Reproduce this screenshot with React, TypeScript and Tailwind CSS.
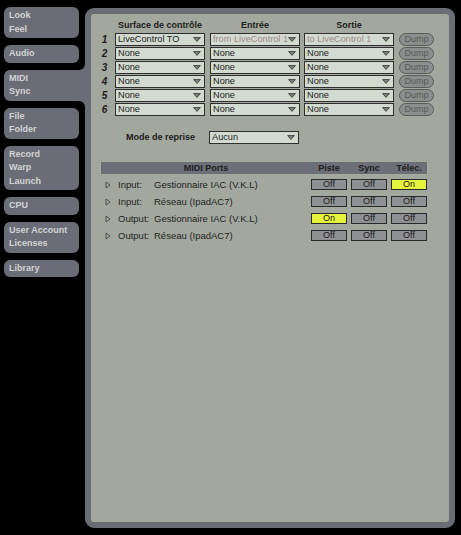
import clsx from "clsx";

const tabs = [
  { lines: ["Look", "Feel"] },
  { lines: ["Audio"] },
  { lines: ["MIDI", "Sync"], active: true },
  { lines: ["File", "Folder"] },
  { lines: ["Record", "Warp", "Launch"] },
  { lines: ["CPU"] },
  { lines: ["User Account", "Licenses"] },
  { lines: ["Library"] },
];

const surfaces = [
  { n: 1, surface: "LiveControl TO", input: "from LiveControl 1", output: "to LiveControl 1", dim: true },
  { n: 2, surface: "None", input: "None", output: "None" },
  { n: 3, surface: "None", input: "None", output: "None" },
  { n: 4, surface: "None", input: "None", output: "None" },
  { n: 5, surface: "None", input: "None", output: "None" },
  { n: 6, surface: "None", input: "None", output: "None" },
];

const ports = [
  { kind: "Input:", name: "Gestionnaire IAC (V.K.L)", state: [false, false, true] },
  { kind: "Input:", name: "Réseau (IpadAC7)", state: [false, false, false] },
  { kind: "Output:", name: "Gestionnaire IAC (V.K.L)", state: [true, false, false] },
  { kind: "Output:", name: "Réseau (IpadAC7)", state: [false, false, false] },
];

const Arrow = () => (
  <svg width="8" height="5" viewBox="0 0 8 5" className="shrink-0">
    <path d="M0.6 0.6 H7.4 L4 4.4 Z" fill="#80837f" stroke="#3c3c3c" strokeWidth="0.9" />
  </svg>
);

const Dropdown = ({ value, dim }: { value: string; dim?: boolean }) => (
  <div className="w-[90px] h-[13px] flex items-center border border-[#2e2e2e] bg-[#d3dbd1] pl-[2px] pr-[3px] shrink-0">
    <span
      className={clsx(
        "flex-1 overflow-hidden whitespace-nowrap text-[9.2px] leading-[11px]",
        dim ? "text-[#a08789]" : "text-[#1b1b1b]"
      )}
    >
      {value}
    </span>
    <Arrow />
  </div>
);

const Dump = () => (
  <div className="w-[35px] h-[13px] rounded-full border border-[#5a5c5c] bg-[#8b8e8d] text-[#575959] text-[9px] flex items-center justify-center leading-none">
    Dump
  </div>
);

const Toggle = ({ on }: { on: boolean }) => (
  <div
    className={clsx(
      "w-[36px] h-[11px] border border-[#2a2a2a] flex items-center justify-center text-[9px] leading-none text-[#1a1a1a]",
      on ? "bg-[#e6f43c]" : "bg-[#8e9094]"
    )}
  >
    {on ? "On" : "Off"}
  </div>
);

const Tab = ({ lines, active }: { lines: string[]; active?: boolean }) => (
  <div
    className={clsx(
      "relative bg-[#6a6d76] pl-[5px] py-[2px] text-[9px] font-bold leading-[13.5px] text-[#d3d3d3]",
      active ? "w-[81px] rounded-l-[6px]" : "w-[75px] rounded-[6px]"
    )}
  >
    {lines.map((l) => (
      <div key={l}>{l}</div>
    ))}
    {active && (
      <>
        <div className="absolute right-0 -top-[6px] w-[6px] h-[6px] bg-[#6a6d76]">
          <div className="w-full h-full bg-black rounded-br-[6px]" />
        </div>
        <div className="absolute right-0 -bottom-[6px] w-[6px] h-[6px] bg-[#6a6d76]">
          <div className="w-full h-full bg-black rounded-tr-[6px]" />
        </div>
      </>
    )}
  </div>
);

const App = () => {
  return (
    <div className="w-[461px] h-[535px] bg-black flex overflow-hidden font-['Liberation_Sans',Arial,sans-serif]">
      <nav className="w-[85px] shrink-0 pl-[4px] pt-[7px] flex flex-col gap-[7px]">
        {tabs.map((t) => (
          <Tab key={t.lines[0]} lines={t.lines} active={t.active} />
        ))}
      </nav>

      <main className="mt-[8px] w-[370px] h-[520px] border-[6px] border-[#6a6d76] rounded-[9px] bg-[#a3a89e] flex flex-col text-[#1c1c1c] leading-none">
        {/* control surfaces */}
        <div className="mt-[4px] h-[14px] flex items-center pl-[7px] text-[9px] font-bold">
          <div className="w-[13px]" />
          <div className="ml-[4px] w-[90px] text-center">Surface de contrôle</div>
          <div className="ml-[5px] w-[90px] text-center">Entrée</div>
          <div className="ml-[4px] w-[90px] text-center">Sortie</div>
        </div>
        <div className="mt-[1px] flex flex-col gap-[1px]">
          {surfaces.map((r) => (
            <div key={r.n} className="h-[13px] flex items-center pl-[7px]">
              <div className="w-[13px] text-center text-[10px] font-bold italic">{r.n}</div>
              <div className="ml-[4px]">
                <Dropdown value={r.surface} />
              </div>
              <div className="ml-[5px]">
                <Dropdown value={r.input} dim={r.dim} />
              </div>
              <div className="ml-[4px]">
                <Dropdown value={r.output} dim={r.dim} />
              </div>
              <div className="ml-[5px]">
                <Dump />
              </div>
            </div>
          ))}
        </div>

        <div className="mt-[15px] h-[13px] flex items-center pl-[35px]">
          <div className="w-[83px] text-[9px] font-bold">Mode de reprise</div>
          <Dropdown value="Aucun" />
        </div>

        {/* midi ports */}
        <div className="mt-[18px] ml-[10px] w-[326px] h-[12px] bg-[#6c6f78] flex items-center text-[9px] font-bold text-[#1e1e1e]">
          <div className="w-[210px] text-center">MIDI Ports</div>
          <div className="w-[36px] text-center">Piste</div>
          <div className="ml-[4px] w-[36px] text-center">Sync</div>
          <div className="ml-[4px] w-[36px] text-center">Télec.</div>
        </div>
        <div className="mt-[2px] flex flex-col">
          {ports.map((p, i) => (
            <div key={i} className="h-[17px] flex items-center text-[9.5px] text-[#222]">
              <svg width="6" height="8" viewBox="0 0 6 8" className="ml-[14px] shrink-0">
                <path d="M1 1 L5 4 L1 7 Z" fill="none" stroke="#454545" strokeWidth="0.9" />
              </svg>
              <div className="ml-[7px] w-[36px]">{p.kind}</div>
              <div className="w-[157px] whitespace-nowrap">{p.name}</div>
              <div className="flex gap-[4px]">
                {p.state.map((on, j) => (
                  <Toggle key={j} on={on} />
                ))}
              </div>
            </div>
          ))}
        </div>
      </main>
    </div>
  );
};

export default App;
